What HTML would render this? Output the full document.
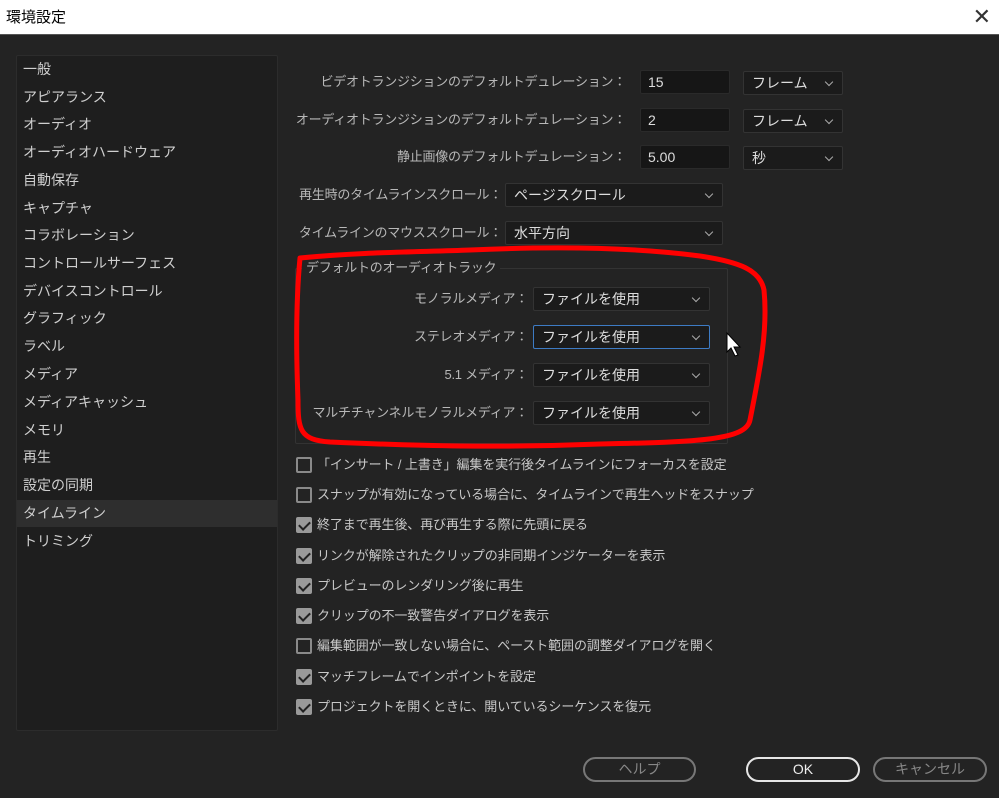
<!DOCTYPE html>
<html><head><meta charset="utf-8"><style>
*{margin:0;padding:0;box-sizing:border-box}
body{width:999px;height:798px;background:#232323;font-family:"Liberation Sans","Noto Sans CJK JP",sans-serif;color:#c4c4c4;position:relative;overflow:hidden;font-size:14px}
.title{position:absolute;left:0;top:0;width:999px;height:35px;background:#fff;color:#000;font-size:15px;line-height:35px;padding-left:6px;border-bottom:1px solid #555}
.close{position:absolute;right:8px;top:0;font-size:22px;color:#333;line-height:33px}
.side{position:absolute;left:16px;top:55px;width:262px;height:676px;background:#1e1e1e;border:1px solid #2c2c2c;border-radius:2px}
.side div{position:absolute;left:0;width:260px;height:27px;line-height:27px;padding-left:6px;color:#cfcfcf;font-size:14px}
.side .sel{background:#2e2e2e}
.ab{position:absolute;white-space:nowrap}
.lbl{text-align:right;color:#b8b8b8;font-size:13px;letter-spacing:-0.25px;line-height:24px}
.inp{background:#161616;border:1px solid #2a2a2a;border-radius:2px;height:24px;line-height:22px;padding-left:7px;color:#ddd;font-size:14px}
.sel2{background:#1b1b1b;border:1px solid #333;border-radius:2px;height:24px;line-height:22px;padding-left:8px;color:#ddd;font-size:14px}
.sel2:after{content:"";position:absolute;right:10px;top:7px;width:5px;height:5px;border-right:1px solid #aaa;border-bottom:1px solid #aaa;transform:rotate(45deg)}
.cb{position:absolute;left:296px;width:16px;height:16px;border:2px solid #8a8a8a;border-radius:2px}
.cb.on{background:#9a9a9a;border-color:#9a9a9a}
.cb.on:after{content:"";position:absolute;left:3px;top:0px;width:5px;height:9px;border-right:2px solid #222;border-bottom:2px solid #222;transform:rotate(45deg)}
.ct{position:absolute;left:317px;font-size:13px;letter-spacing:-0.1px;color:#c8c8c8;line-height:16px;white-space:nowrap}
.btn{position:absolute;top:757px;height:25px;border:2px solid #777;border-radius:13px;text-align:center;line-height:21px;color:#888;font-size:14px}
</style></head><body>
<div class="title">環境設定<span class="close">✕</span></div>
<div class="side">
<div style="top:0">一般</div><div style="top:28px">アピアランス</div><div style="top:55px">オーディオ</div><div style="top:83px">オーディオハードウェア</div><div style="top:111px">自動保存</div><div style="top:139px">キャプチャ</div><div style="top:166px">コラボレーション</div><div style="top:194px">コントロールサーフェス</div><div style="top:222px">デバイスコントロール</div><div style="top:249px">グラフィック</div><div style="top:277px">ラベル</div><div style="top:305px">メディア</div><div style="top:333px">メディアキャッシュ</div><div style="top:361px">メモリ</div><div style="top:388px">再生</div><div style="top:416px">設定の同期</div><div class="sel" style="top:444px">タイムライン</div><div style="top:472px">トリミング</div>
</div>

<div class="ab lbl" style="right:373px;top:70px">ビデオトランジションのデフォルトデュレーション：</div>
<div class="ab inp" style="left:640px;top:70px;width:90px">15</div>
<div class="ab sel2" style="left:743px;top:71px;width:100px">フレーム</div>
<div class="ab lbl" style="right:373px;top:108px">オーディオトランジションのデフォルトデュレーション：</div>
<div class="ab inp" style="left:640px;top:108px;width:90px">2</div>
<div class="ab sel2" style="left:743px;top:109px;width:100px">フレーム</div>
<div class="ab lbl" style="right:373px;top:145px">静止画像のデフォルトデュレーション：</div>
<div class="ab inp" style="left:640px;top:145px;width:90px">5.00</div>
<div class="ab sel2" style="left:743px;top:146px;width:100px">秒</div>
<div class="ab lbl" style="right:497px;top:183px">再生時のタイムラインスクロール：</div>
<div class="ab sel2" style="left:505px;top:183px;width:218px">ページスクロール</div>
<div class="ab lbl" style="right:497px;top:221px">タイムラインのマウススクロール：</div>
<div class="ab sel2" style="left:505px;top:221px;width:218px">水平方向</div>

<div class="ab" style="left:295px;top:268px;width:433px;height:176px;border:1px solid #333;border-radius:2px"></div>
<div class="ab" style="left:302px;top:259px;background:#232323;padding:0 4px;font-size:13px;letter-spacing:-0.25px;color:#b8b8b8;line-height:18px">デフォルトのオーディオトラック</div>
<div class="ab lbl" style="right:471px;top:287px">モノラルメディア：</div>
<div class="ab sel2" style="left:533px;top:287px;width:177px">ファイルを使用</div>
<div class="ab lbl" style="right:471px;top:325px">ステレオメディア：</div>
<div class="ab sel2" style="left:533px;top:325px;width:177px;border-color:#3d7bc4">ファイルを使用</div>
<div class="ab lbl" style="right:471px;top:363px">5.1 メディア：</div>
<div class="ab sel2" style="left:533px;top:363px;width:177px">ファイルを使用</div>
<div class="ab lbl" style="right:471px;top:401px">マルチチャンネルモノラルメディア：</div>
<div class="ab sel2" style="left:533px;top:401px;width:177px">ファイルを使用</div>

<svg class="ab" style="left:0;top:0" width="999" height="798">
<path d="M300 258 C360 252 420 252 470 250 C560 246 640 248 700 256 C740 262 760 270 764 290 C768 330 760 370 750 420 C746 440 700 442 600 444 C500 448 420 446 330 442 C300 440 298 430 298 400 C296 350 296 300 300 258 Z" fill="none" stroke="#f00" stroke-width="5" stroke-linejoin="round"/>
<path d="M727 333 L727 352 L731 348 L735 356 L738 355 L734 347 L740 347 Z" fill="#fff" stroke="#000" stroke-width="1"/>
</svg>

<div class="cb" style="top:457px"></div><div class="ct" style="top:457px">「インサート / 上書き」編集を実行後タイムラインにフォーカスを設定</div>
<div class="cb" style="top:487px"></div><div class="ct" style="top:487px">スナップが有効になっている場合に、タイムラインで再生ヘッドをスナップ</div>
<div class="cb on" style="top:517px"></div><div class="ct" style="top:517px">終了まで再生後、再び再生する際に先頭に戻る</div>
<div class="cb on" style="top:548px"></div><div class="ct" style="top:548px">リンクが解除されたクリップの非同期インジケーターを表示</div>
<div class="cb on" style="top:578px"></div><div class="ct" style="top:578px">プレビューのレンダリング後に再生</div>
<div class="cb on" style="top:608px"></div><div class="ct" style="top:608px">クリップの不一致警告ダイアログを表示</div>
<div class="cb" style="top:638px"></div><div class="ct" style="top:638px">編集範囲が一致しない場合に、ペースト範囲の調整ダイアログを開く</div>
<div class="cb on" style="top:669px"></div><div class="ct" style="top:669px">マッチフレームでインポイントを設定</div>
<div class="cb on" style="top:699px"></div><div class="ct" style="top:699px">プロジェクトを開くときに、開いているシーケンスを復元</div>

<div class="btn" style="left:583px;width:113px">ヘルプ</div>
<div class="btn" style="left:746px;width:114px;border-color:#e6e6e6;color:#eee">OK</div>
<div class="btn" style="left:873px;width:114px">キャンセル</div>
</body></html>
